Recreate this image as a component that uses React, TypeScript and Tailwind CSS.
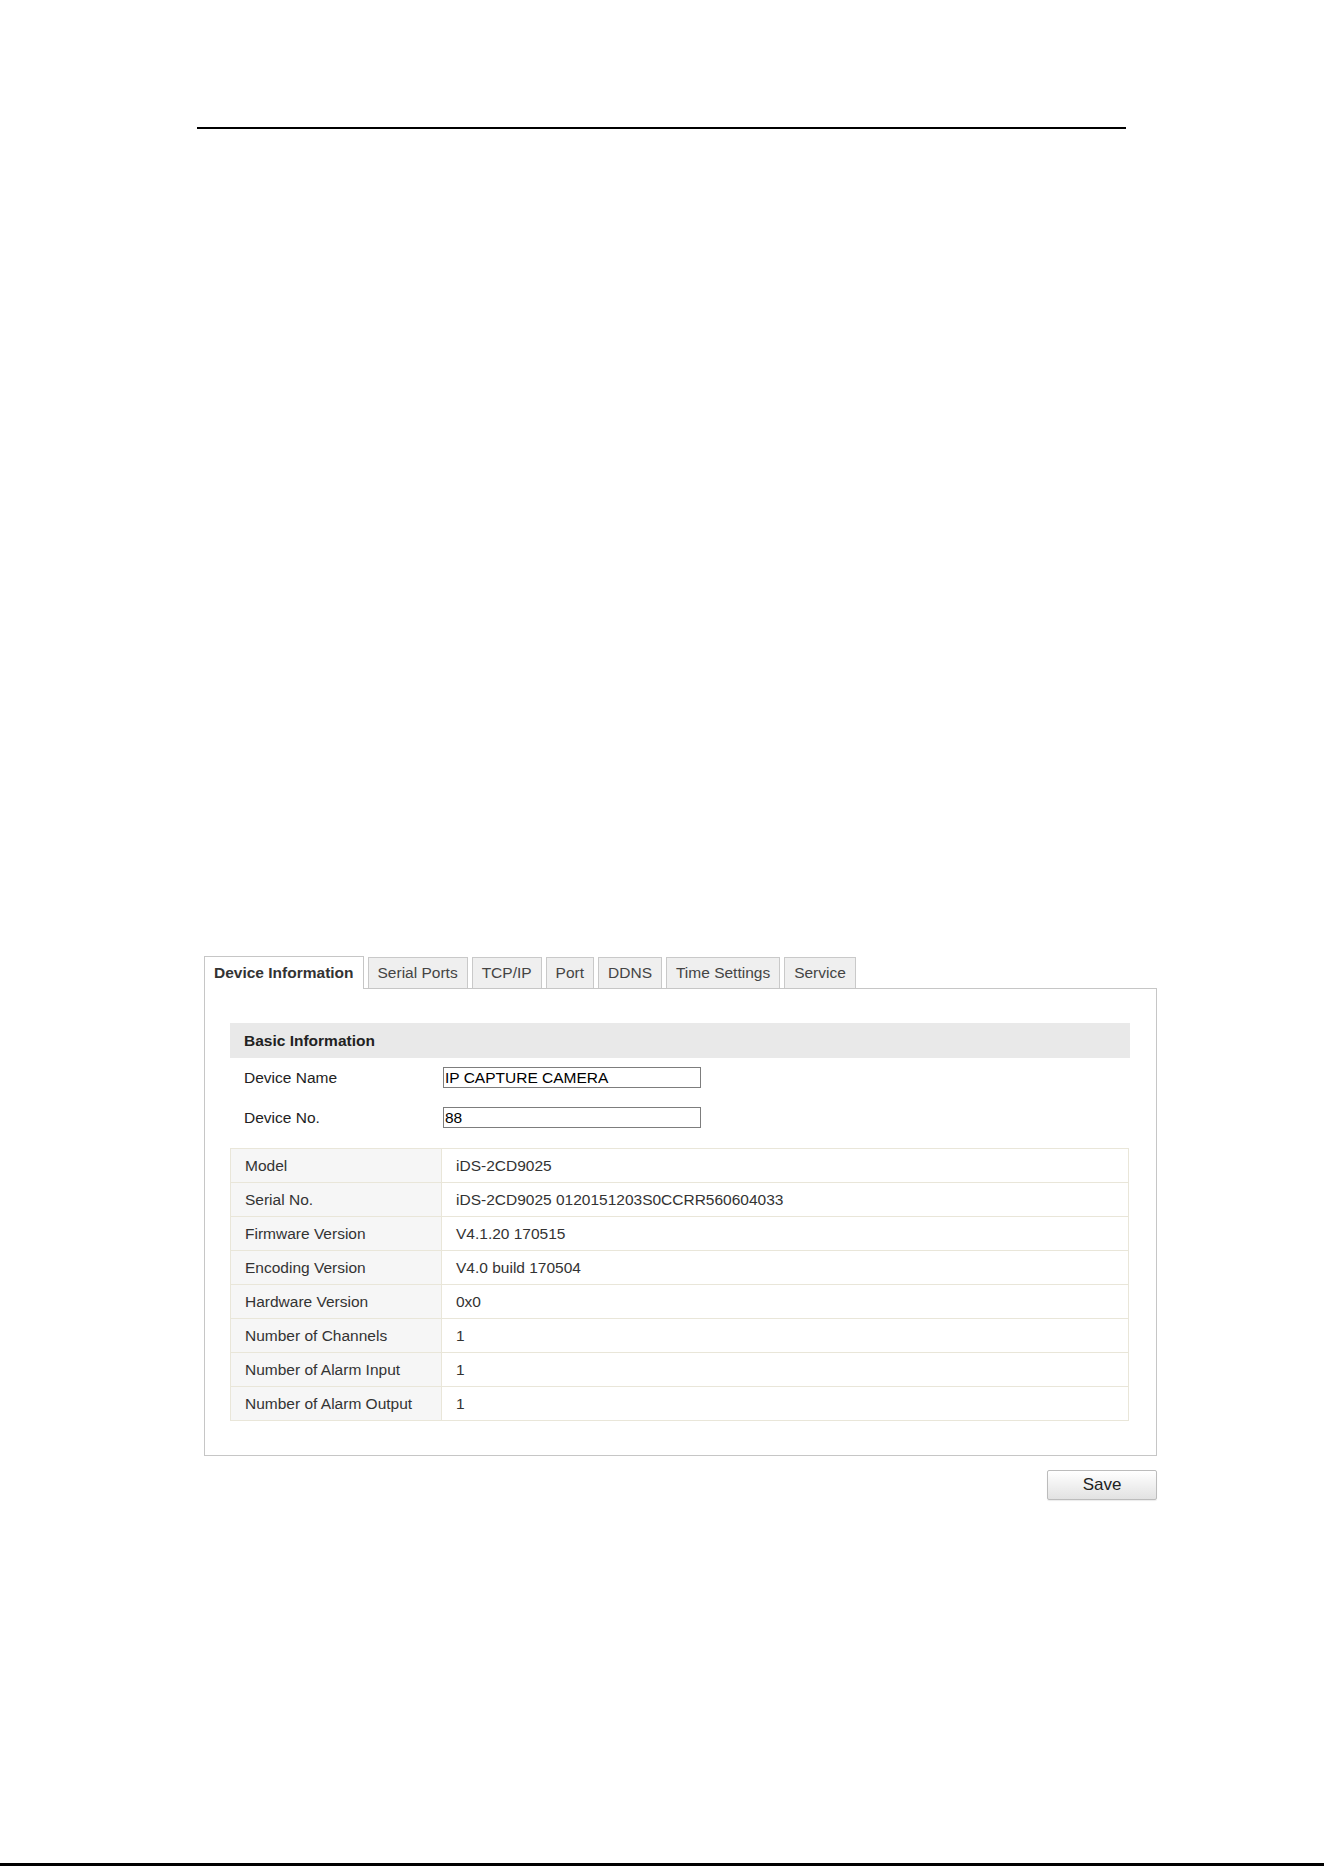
import React from 'react';

const tabs = ['Device Information', 'Serial Ports', 'TCP/IP', 'Port', 'DDNS', 'Time Settings', 'Service'];

const deviceInfo: [string, string][] = [
  ['Model', 'iDS-2CD9025'],
  ['Serial No.', 'iDS-2CD9025 0120151203S0CCRR560604033'],
  ['Firmware Version', 'V4.1.20 170515'],
  ['Encoding Version', 'V4.0 build 170504'],
  ['Hardware Version', '0x0'],
  ['Number of Channels', '1'],
  ['Number of Alarm Input', '1'],
  ['Number of Alarm Output', '1'],
];

const FieldRow: React.FC<{ label: string; value: string; className?: string }> = ({ label, value, className }) => (
  <div className={`flex items-center h-[21px] leading-[21px] ${className ?? ''}`}>
    <span className="w-[213px] pl-[14px] text-[#222]">{label}</span>
    <input
      readOnly
      defaultValue={value}
      className="w-[258px] h-[21px] border border-[#7d7d7d] px-[1px] text-[15.5px] leading-none text-black outline-none bg-white"
    />
  </div>
);

const App: React.FC = () => {
  const active = 0;

  return (
    <div className="w-[1324px] h-[1872px] bg-white flex flex-col font-['Liberation_Sans',Arial,sans-serif] text-[15.5px]">
      {/* page header rule */}
      <div className="mt-[127px] ml-[197px] w-[929px] h-[2px] bg-black" />

      <div className="mt-[827px] ml-[204px] w-[953px]">
        {/* tab strip */}
        <div className="flex items-end gap-[4px] h-[32px]">
          {tabs.map((t, i) =>
            i === active ? (
              <div
                key={t}
                className="relative z-10 h-[33px] -mb-px px-[9px] flex items-center border border-b-0 border-[#c6c6c6] bg-white font-bold text-[#333]"
              >
                {t}
              </div>
            ) : (
              <div
                key={t}
                className="h-[31px] px-[9px] flex items-center border border-b-0 border-[#c9c9c9] bg-[#efefef] text-[#444]"
              >
                {t}
              </div>
            )
          )}
        </div>

        {/* tab body */}
        <div className="border border-[#c6c6c6] pt-[34px] pl-[25px] pr-[26px] pb-[34px]">
          <div className="h-[35px] bg-[#e9e9e9] flex items-center pl-[14px] font-bold text-[#222]">
            Basic Information
          </div>
          <FieldRow label="Device Name" value="IP CAPTURE CAMERA" className="mt-[9px]" />
          <FieldRow label="Device No." value="88" className="mt-[19px]" />

          <table className="mt-[20px] w-[899px] border-collapse text-[#333]">
            <tbody>
              {deviceInfo.map(([k, v]) => (
                <tr key={k} className="h-[34px]">
                  <td className="w-[211px] border border-[#e9e6d9] bg-[#f6f6f6] pl-[14px]">{k}</td>
                  <td className="border border-[#e9e6d9] bg-white pl-[14px]">{v}</td>
                </tr>
              ))}
            </tbody>
          </table>
        </div>

        <div className="flex justify-end mt-[14px]">
          <button className="w-[110px] h-[30px] border border-[#bcbcbc] rounded-[2px] bg-linear-to-b from-white to-[#e2e2e2] text-[17px] text-[#222] shadow-[0_1px_1px_rgba(0,0,0,0.08)]">
            Save
          </button>
        </div>
      </div>

      <div className="flex-1" />
      {/* page footer rule */}
      <div className="h-[3px] bg-black mb-[6px]" />
    </div>
  );
};

export default App;
